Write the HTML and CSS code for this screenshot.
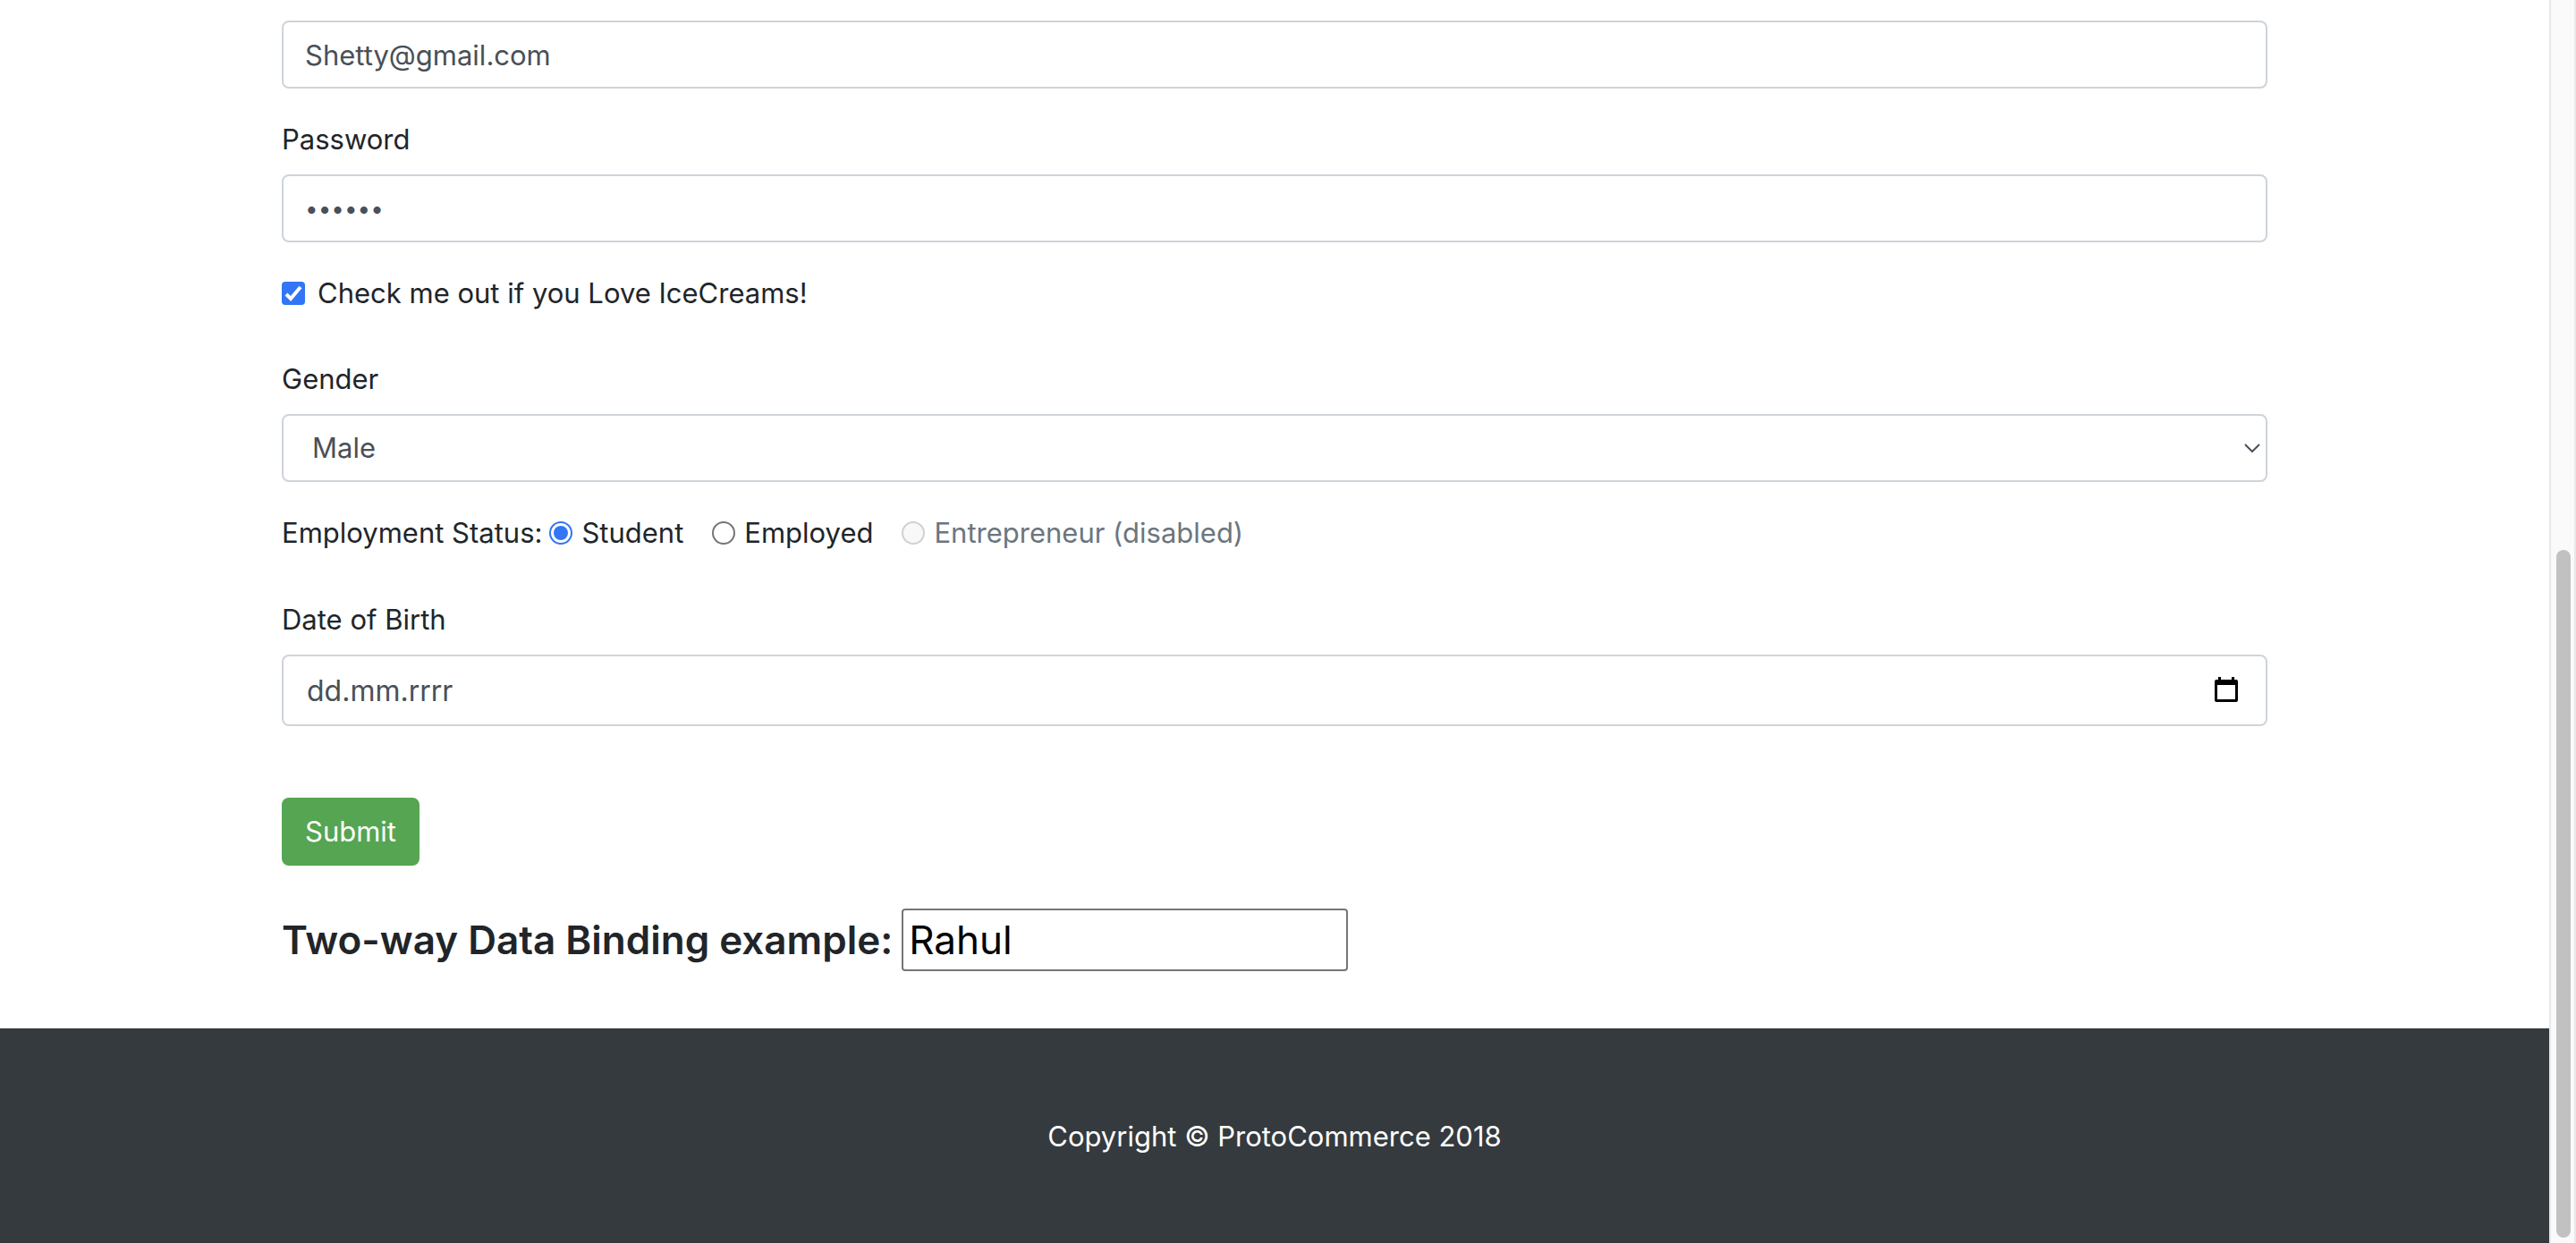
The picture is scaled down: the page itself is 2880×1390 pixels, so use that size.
FILE: index.html
```html
<!DOCTYPE html>
<html lang="en">
<head>
<meta charset="utf-8">
<title>ProtoCommerce</title>
<link rel="stylesheet" href="styles.css">
</head>
<body>
<div class="page">
  <main class="container">
    <form class="form">
      <div class="form-group">
        <input class="form-control" type="text" name="email" value="Shetty@gmail.com" aria-label="Email">
      </div>
      <div class="form-group">
        <label for="password">Password</label>
        <input class="form-control password" id="password" type="password" value="secret">
      </div>
      <div class="form-check">
        <input class="tick checkbox" type="checkbox" id="icecream" checked>
        <label for="icecream">Check me out if you Love IceCreams!</label>
      </div>
      <div class="form-group">
        <label for="gender">Gender</label>
        <div class="field">
          <select class="form-control select" id="gender">
            <option>Male</option>
            <option>Female</option>
          </select>
          <svg class="arrow" viewBox="0 0 18 10" aria-hidden="true"><path d="M1 1L9 9L17 1" fill="none" stroke="#495057" stroke-width="2"/></svg>
        </div>
      </div>
      <div class="status" role="radiogroup" aria-labelledby="status">
        <span id="status">Employment Status:</span>
        <div class="option">
          <input class="tick radio" type="radio" name="status" id="student" checked>
          <label for="student">Student</label>
        </div>
        <div class="option">
          <input class="tick radio" type="radio" name="status" id="employed">
          <label for="employed">Employed</label>
        </div>
        <div class="option disabled">
          <input class="tick radio" type="radio" name="status" id="entrepreneur" disabled>
          <label for="entrepreneur">Entrepreneur (disabled)</label>
        </div>
      </div>
      <div class="form-group">
        <label for="birth">Date of Birth</label>
        <div class="field">
          <input class="form-control date" id="birth" type="text" value="dd.mm.rrrr">
          <button class="picker" type="button" aria-label="Show date picker">
            <svg viewBox="0 0 26 28" aria-hidden="true"><path d="M4 0h3v3h12V0h3v3h2q2 0 2 2v21q0 2-2 2H2q-2 0-2-2V5q0-2 2-2h2zM3 9v16h20V9z" fill="#000" fill-rule="evenodd"/></svg>
          </button>
        </div>
      </div>
      <button class="submit" type="submit">Submit</button>
    </form>
    <div class="binding">
      <label for="binding">Two-way Data Binding example:</label>
      <input id="binding" type="text" value="Rahul">
    </div>
  </main>
  <footer class="footer">Copyright © ProtoCommerce 2018</footer>
</div>
<div class="scrollbar" aria-hidden="true"><div class="thumb"></div></div>
</body>
</html>
```
FILE: styles.css
```css
* {
  box-sizing: border-box;
}

body {
  display: flex;
  min-height: 100vh;
  margin: 0;
  background: #fff;
  color: #212529;
  font-family: Inter, "Liberation Sans", sans-serif;
  font-size: 31px;
  line-height: 50px;
}

input,
select,
button {
  margin: 0;
  font-family: inherit;
  font-size: inherit;
  line-height: inherit;
}

.page {
  display: flex;
  flex: 1;
  flex-direction: column;
}

.container {
  flex: 1;
  width: 100%;
  max-width: 2280px;
  margin: 0 auto;
  padding: 23px 30px 64px;
}

.form {
  display: flex;
  flex-direction: column;
  gap: 32px;
}

.form-group {
  display: flex;
  flex-direction: column;
  gap: 14px;
}

.form-control {
  display: block;
  width: 100%;
  height: 76px;
  padding: 10px 24px;
  border: 2px solid #ced4da;
  border-radius: 8px;
  background: #fff;
  color: #495057;
}

.password {
  font-size: 26px;
}

.field {
  position: relative;
}

.select {
  padding-left: 32px;
  appearance: none;
}

.arrow {
  position: absolute;
  top: 33px;
  right: 8px;
  width: 18px;
  height: 10px;
  pointer-events: none;
}

.date {
  height: 80px;
  padding-left: 26px;
  font-size: 32px;
}

.picker {
  position: absolute;
  top: 25px;
  right: 33px;
  display: flex;
  padding: 0;
  border: 0;
  background: none;
}

.picker svg {
  width: 26px;
  height: 28px;
}

.tick {
  flex: none;
  width: 26px;
  height: 26px;
  appearance: none;
}

.checkbox {
  border: 2px solid #767676;
  border-radius: 4px;
}

.checkbox:checked {
  border: 0;
  background: #3275f6 url("data:image/svg+xml,%3Csvg xmlns='http://www.w3.org/2000/svg' viewBox='0 0 26 26'%3E%3Cpath d='M5 14L10 19L21 6' fill='none' stroke='white' stroke-width='4'/%3E%3C/svg%3E") center / contain no-repeat;
}

.radio {
  padding: 3px;
  border: 2px solid #767676;
  border-radius: 50%;
}

.radio:checked {
  border-color: #3275f6;
  background: #3275f6 content-box;
}

.radio:disabled {
  border-color: #d1d1d1;
  background: #f8f8f8;
}

.form-check {
  display: flex;
  align-items: center;
  gap: 14px;
  margin-bottom: 14px;
}

.status {
  display: flex;
  gap: 32px;
  margin-bottom: 15px;
}

.status > span {
  margin-right: -24px;
}

.option {
  display: flex;
  align-items: center;
  gap: 10px;
}

.disabled {
  color: #6c757d;
}

.submit {
  align-self: flex-start;
  height: 76px;
  margin-top: 48px;
  padding: 12px 26px;
  border: 0;
  border-radius: 8px;
  background: #55a552;
  color: #fff;
}

.binding {
  display: flex;
  align-items: center;
  gap: 10px;
  margin-top: 48px;
  font-size: 44px;
  font-weight: 600;
}

.binding input {
  width: 499px;
  height: 70px;
  padding: 2px 6px;
  border: 2px solid #767676;
  border-radius: 4px;
  background: #fff;
  color: #000;
  font-weight: 400;
}

.footer {
  padding: 96px 32px 92px;
  border-bottom: 2px solid #333740;
  background: #353a3e;
  color: #fff;
  text-align: center;
}

.scrollbar {
  display: flex;
  flex: none;
  align-items: flex-end;
  width: 30px;
  padding: 10px 4px 6px 6px;
  border: solid #e8e8e8;
  border-width: 0 2px;
  background: #fafafa;
}

.thumb {
  width: 16px;
  height: 56%;
  border-radius: 8px;
  background: #c1c1c1;
}
```
